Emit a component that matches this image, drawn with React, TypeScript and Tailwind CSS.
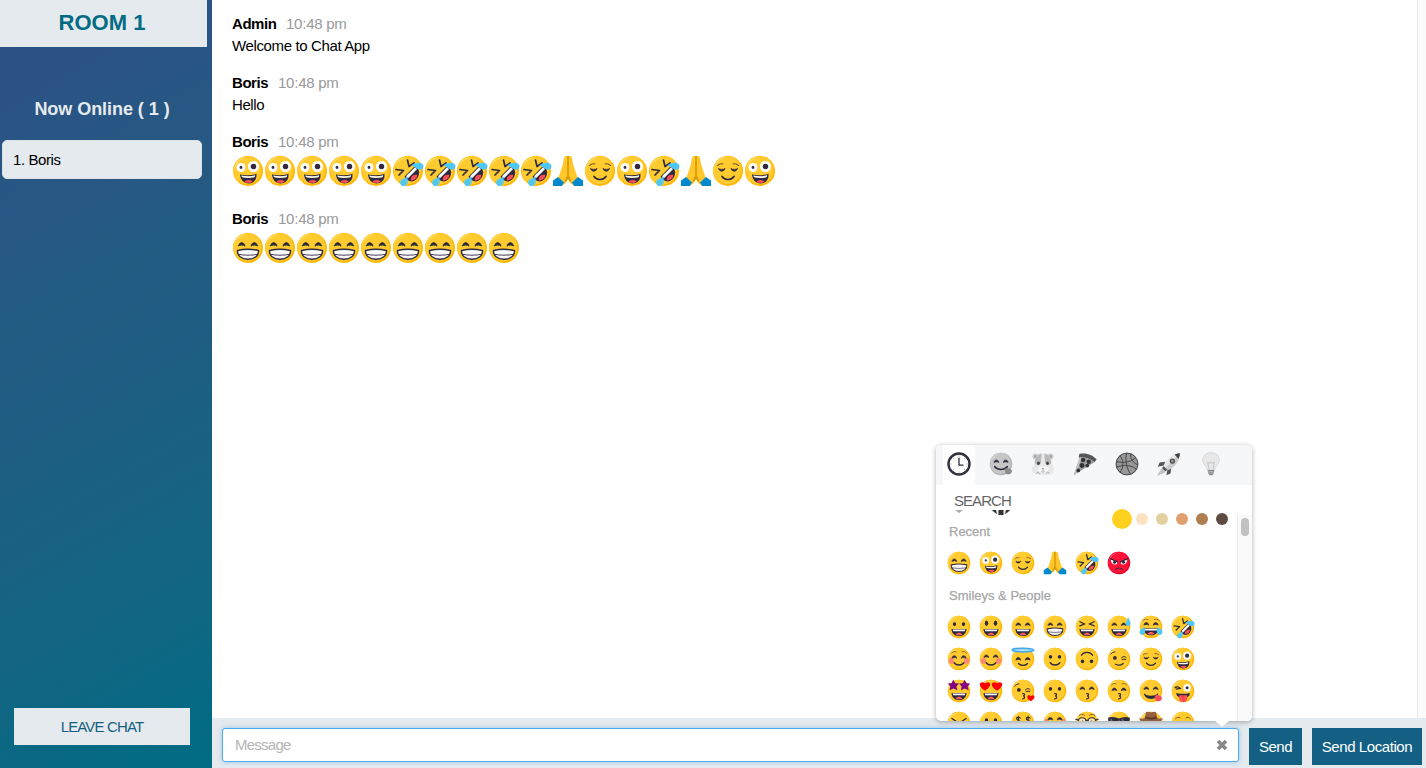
import React from "react";

const INK = "#2f2a3d";
const BLUE = "#4fc8f7";
const RED = "#ff0000";
const PINK = "#ff7f86";

const STROKE = { fill: "none", stroke: INK, strokeWidth: 3.4, strokeLinecap: "round" as const };

function Ball({ main = "#ffcb2f", shade = "#ffb500", light = "#ffe28c" }) {
  return (
    <g>
      <circle cx="32" cy="32" r="30" fill={shade} />
      <ellipse cx="30.5" cy="30.5" rx="28.2" ry="28.2" fill={main} />
      <path d="M5 25C8 13 17 5.5 28 4.5C18 8 10 14 5 25Z" fill={light} />
    </g>
  );
}

const HappyEyes = ({ y = 0 }) => (
  <path
    d="M13 28C14.500 19 24.500 19 26 28C22 25.500 17 25.500 13 28ZM38 28C39.500 19 49.500 19 51 28C47 25.500 42 25.500 38 28Z"
    transform={`translate(0 ${y})`}
    fill={INK}
    stroke={INK}
    strokeWidth="1.800"
    strokeLinejoin="round"
  />
);

const DotEyes = ({ ry = 5, y = 24 }) => (
  <g fill={INK}>
    <ellipse cx="20" cy={y} rx="4.500" ry={ry} />
    <ellipse cx="44" cy={y} rx="4.500" ry={ry} />
  </g>
);

const ClosedEyes = () => (
  <g>
    <path d="M13 27C15 34 24 34 26 27C22 29.500 17 29.500 13 27ZM38 27C40 34 49 34 51 27C47 29.500 42 29.500 38 27Z" fill={INK} stroke={INK} strokeWidth="1.500" strokeLinejoin="round" />
    <path d="M11 21C14 18 18 17 22 18M53 21C50 18 46 17 42 18" {...STROKE} stroke="#7a5a2a" strokeWidth="2.200" />
  </g>
);

const OpenMouth = ({ y = 0 }) => (
  <g transform={`translate(0 ${y})`}>
    <path d="M12 37H52C52 49 43 56 32 56C21 56 12 49 12 37Z" fill={INK} />
    <path d="M15 38.500H49L47.500 43.500H16.500Z" fill="#fff" />
    <path d="M23 52C27 46 37 46 41 52C36 55 28 55 23 52Z" fill="#ff5a64" />
  </g>
);

const Smile = () => <path d="M19 42C25 50 39 50 45 42" {...STROKE} />;
const Kiss = () => <path d="M31 39C38 38 38 44 32 45.500C38 46 38 53 31 53" {...STROKE} strokeWidth="3" />;
const Cheeks = () => (
  <g fill={PINK} opacity=".85">
    <circle cx="12" cy="37" r="7.500" />
    <circle cx="52" cy="37" r="7.500" />
  </g>
);
const Squint = () => <path d="M13 18L25 24L13 29M51 18L39 24L51 29" {...STROKE} strokeWidth="3.600" />;
const Heart = ({ x, y, s }: { x: number; y: number; s: number }) => (
  <path transform={`translate(${x} ${y}) scale(${s})`} d="M0 10C-18 0-10-12 0-5C10-12 18 0 0 10Z" fill={RED} />
);
const Wild = () => (
  <g>
    <circle cx="18" cy="25" r="9" fill="#fff" />
    <circle cx="43" cy="23" r="11" fill="#fff" />
    <circle cx="18" cy="25" r="2.800" fill={INK} />
    <circle cx="43" cy="23" r="5.500" fill={INK} />
  </g>
);
const Star = ({ x }: { x: number }) => (
  <path transform={`translate(${x} 17)`} d="M0-15L5-6L15-5L8 3L11 13L0 8L-10 13L-8 3L-15-5L-5-6Z" fill="#850080" />
);
const Wink = () => (
  <g>
    <ellipse cx="21" cy="29" rx="5" ry="5" fill={INK} />
    <path d="M39 28C43 25 48 25 51 28M40 33H50M10 19C13 15 17 13 21 13" {...STROKE} strokeWidth="2.600" />
  </g>
);

function art(kind: string): React.ReactNode {
  switch (kind) {
    case "grinning":
      return <><Ball /><DotEyes /><OpenMouth /></>;
    case "smiley":
      return <><Ball /><DotEyes ry={7.5} y={22} /><OpenMouth /></>;
    case "smile":
      return <><Ball /><HappyEyes /><OpenMouth /></>;
    case "grin":
      return (
        <>
          <Ball />
          <HappyEyes />
          <path d="M11 37C24 34 40 34 53 37C54 47 45 54.500 32 54.500C19 54.500 10 47 11 37Z" fill="#fff" stroke={INK} strokeWidth="2.800" strokeLinejoin="round" />
          <path d="M22 37L24 53M32 36V53M42 37L40 53" fill="none" stroke="#d8d7dc" strokeWidth="1" />
          <path d="M12 44.500C26 47 38 47 52 44.500" fill="none" stroke={INK} strokeWidth="1.800" />
        </>
      );
    case "laughing":
      return <><Ball /><Squint /><OpenMouth /></>;
    case "sweat":
      return <><Ball /><HappyEyes /><OpenMouth /><path d="M56 5C59 13 64 19 63 24C62 31 51 31 50 24C50 18 55 12 56 5Z" fill={BLUE} /></>;
    case "joy":
      return (
        <>
          <Ball /><HappyEyes y={-1} /><OpenMouth y={-2} />
          <path d="M10 15C14 11 19 10 23 12M54 15C50 11 45 10 41 12" {...STROKE} stroke="#7a5a2a" strokeWidth="2" />
          <path d="M14 32C18 42 17 52 9 53C1 53 0 44 3 40C6 36 11 36 14 32ZM50 32C46 42 47 52 55 53C63 53 64 44 61 40C58 36 53 36 50 32Z" fill={BLUE} />
        </>
      );
    case "rofl":
      return (
        <>
          <Ball />
          <path d="M31 10L34 23L44 16M8 29L23 31L14 40" {...STROKE} strokeWidth="3.400" strokeLinejoin="round" />
          <path d="M25 43L47 21C56 29 57 41 48 49C41 56 31 53 25 43Z" fill={INK} />
          <path d="M28 42.500L46 24.500L50 28.500L32 46.500Z" fill="#fff" />
          <path d="M38 51C36 45 42 38 51 40C50 46 45 51 38 51Z" fill="#ff4d58" />
          <path d="M38 21C44 16 55 13 61 18C66 24 61 31 54 29C48 28 45 22 38 21Z" fill={BLUE} />
          <path d="M30 43C32 49 33 57 27 61C20 65 14 59 17 52C19 47 26 48 30 43Z" fill={BLUE} />
        </>
      );
    case "relaxed":
      return (
        <><Ball /><Cheeks /><HappyEyes y={2} /><Smile /><path d="M12 17C15 12 20 11 24 13M52 17C49 12 44 11 40 13" {...STROKE} stroke="#7a5a2a" strokeWidth="2.200" /></>
      );
    case "blush":
      return <><Ball /><Cheeks /><HappyEyes /><Smile /></>;
    case "angel":
      return <><Ball /><HappyEyes y={7} /><path d="M20 44C26 51 38 51 44 44" {...STROKE} /><ellipse cx="32" cy="8" rx="29" ry="5" fill="#a9ddfb" stroke="#42a8ed" strokeWidth="4" /></>;
    case "slight":
      return <><Ball /><DotEyes y={26} /><Smile /></>;
    case "upside":
      return <><Ball /><DotEyes y={38} /><path d="M17 22C24 12 40 12 47 22" {...STROKE} /></>;
    case "wink":
      return <><Ball /><Wink /><path d="M23 46C31 50 39 48 43 44" {...STROKE} /></>;
    case "relieved":
      return <><Ball /><ClosedEyes /><path d="M20 43C26 51 38 51 44 43" {...STROKE} /></>;
    case "zany":
      return (
        <>
          <Ball /><Wild />
          <path d="M16 39C26 41 38 41 49 38C50 50 43 57 33 57C24 57 17 50 16 39Z" fill={INK} />
          <path d="M18.500 41C29 43 38 43 46.500 40.500L45 44.500C37 46.500 29 46.500 20 44.500Z" fill="#fff" />
          <path d="M25 54C28 49 38 49 41 53C37 57 30 57 25 54Z" fill="#ff4d58" />
        </>
      );
    case "starstruck":
      return <><Ball /><Star x={17} /><Star x={47} /><OpenMouth /></>;
    case "hearteyes":
      return <><Ball /><Heart x={16} y={18} s={1.3} /><Heart x={48} y={18} s={1.3} /><OpenMouth /></>;
    case "kissheart":
      return <><Ball /><Wink /><Kiss /><Heart x={53} y={50} s={0.9} /></>;
    case "kissing":
      return <><Ball /><DotEyes y={26} /><Kiss /></>;
    case "kisssmile":
      return <><Ball /><HappyEyes /><Kiss /></>;
    case "kissclosed":
      return <><Ball /><HappyEyes y={3} /><Kiss /><path d="M12 16C15 12 20 11 24 13M52 16C49 12 44 11 40 13" {...STROKE} stroke="#7a5a2a" strokeWidth="2.200" /></>;
    case "yum":
      return <><Ball /><HappyEyes /><path d="M13 38C22 47 42 47 51 38C51 47 43 53 32 53C21 53 14 47 13 38Z" fill={INK} /><path d="M42 47C46 40 56 43 61 49C61 60 50 62 44 57Z" fill="#ff4d58" /></>;
    case "winktongue":
      return <><Ball /><path d="M11 23C15 20 21 21 25 25L14 27" {...STROKE} /><circle cx="43" cy="23" r="10" fill="#fff" /><circle cx="43" cy="23" r="4" fill={INK} /><path d="M14 37C25 40 39 40 50 37C50 46 46 49 32 50C20 49 15 46 14 37Z" fill={INK} /><path d="M22 43H43V53C43 64 22 64 22 53Z" fill="#ff4d58" /><path d="M32 43V54" stroke="#d92a43" strokeWidth="2" /></>;
    case "tongueclosed":
      return <><Ball /><path d="M13 20L25 28L13 32M51 20L39 28L51 32" {...STROKE} /><OpenMouth y={4} /></>;
    case "tongue":
      return <><Ball /><DotEyes ry={6} y={25} /><OpenMouth /></>;
    case "money":
      return <><Ball /><g {...STROKE} strokeWidth="3"><path d="M25 19C20 15 14 17 15 21C16 25 25 24 25 29C24 33 17 34 13 30M20 14V35M51 19C46 15 40 17 41 21C42 25 51 24 51 29C50 33 43 34 39 30M46 14V35" /></g></>;
    case "hug":
      return <><Ball /><g fill={PINK}><circle cx="9" cy="27" r="6" /><circle cx="54" cy="27" r="6" /></g><HappyEyes y={-4} /><path d="M18 36C25 40 39 40 46 36C44 48 20 48 18 36Z" fill={INK} /></>;
    case "nerd":
      return <><Ball /><path d="M11 12C15 8 21 8 25 11M53 12C49 8 43 8 39 11" {...STROKE} stroke="#7a5a2a" strokeWidth="2.500" /><circle cx="19" cy="29" r="11" fill="#ffe9a8" stroke={INK} strokeWidth="3.200" /><circle cx="45" cy="29" r="11" fill="#ffe9a8" stroke={INK} strokeWidth="3.200" /><path d="M2 22L10 24M62 22L54 24M29 26C31 24 33 24 35 26" {...STROKE} strokeWidth="3" /><circle cx="20" cy="29" r="3.500" fill={INK} /><circle cx="44" cy="29" r="3.500" fill={INK} /></>;
    case "cool":
      return <><Ball /><path d="M3 18C15 14 25 18 32 20C39 18 49 14 61 18C61 31 56 38 47 38C39 38 35 32 34 26H30C29 32 25 38 17 38C8 38 3 31 3 18Z" fill={INK} /><path d="M10 22L18 34M40 22L48 34" stroke="#777282" strokeWidth="4" /></>;
    case "cowboy":
      return <><Ball /><path d="M1 18C5 22 12 21 16 18L18 4C24 0 28 4 32 4C36 4 40 0 46 4L48 18C52 21 59 22 63 18C63 29 51 31 32 31C13 31 1 29 1 18Z" fill="#955f42" /><path d="M17 14C27 18 37 18 47 14L48 20C38 24 26 24 16 20Z" fill="#633d2b" /></>;
    case "smirk":
      return <><Ball /><path d="M12 21C15 17 20 16 24 18M40 18C44 16 49 17 52 21" {...STROKE} stroke="#7a5a2a" strokeWidth="2.500" /><path d="M13 29H25M39 29H51" {...STROKE} /></>;
    case "rage":
      return <><Ball main="#ff1237" shade="#e9002a" light="#ff7188" /><path d="M10 23C17 23 23 26 28 31C25 39 12 38 10 23M54 23C47 23 41 26 36 31C39 39 52 38 54 23" fill="#fff" /><path d="M8 20L28 29M56 20L36 29" {...STROKE} strokeWidth="3.600" /><circle cx="20" cy="30" r="4" fill={INK} /><circle cx="44" cy="30" r="4" fill={INK} /><path d="M23 49C27 44 37 44 41 49" {...STROKE} strokeWidth="3" /></>;
    case "pray":
      return (
        <>
          <path d="M28 2C24 2 23 9 22 18L15 39L10 51L22 60C28 57 30 52 32 48C34 52 36 57 42 60L54 51L49 39L42 18C41 9 40 2 36 2Z" fill="#ffc72c" />
          <path d="M30 2H34V42C37 46 38 51 40 57L33 49H31L24 57C26 51 27 46 30 42Z" fill="#d99a00" />
          <path d="M32 3V43" stroke="#e9b11c" strokeWidth="1.500" />
          <path d="M12 44L24 55L20 62H2V51ZM52 44L40 55L44 62H62V51Z" fill="#0089cf" />
        </>
      );
    case "clock":
      return <><circle cx="32" cy="32" r="28" fill="#fff" stroke="#30303f" strokeWidth="6.500" /><path d="M32 15V35H44" fill="none" stroke="#30303f" strokeWidth="3.500" /><path d="M32 9V12M32 52V55M9 32H12M52 32H55M16 16L18 18M48 16L46 18M16 48L18 46M48 48L46 46" stroke="#888" strokeWidth="2" /></>;
    case "hamster":
      return (
        <>
          <circle cx="12" cy="12" r="8" fill="#cfcfcf" /><circle cx="52" cy="12" r="8" fill="#cfcfcf" />
          <circle cx="12" cy="12" r="4" fill="#9c9c9c" /><circle cx="52" cy="12" r="4" fill="#9c9c9c" />
          <path d="M32 3C47 3 54 14 55 28C57 37 62 39 62 47C62 57 51 61 32 61C13 61 2 57 2 47C2 39 7 37 9 28C10 14 17 3 32 3Z" fill="#e8e8e8" />
          <path d="M10 27C11 13 19 5 28 4L27 28C24 38 12 37 10 27ZM54 27C53 13 45 5 36 4L37 28C40 38 52 37 54 27Z" fill="#b9b9b9" />
          <ellipse cx="20" cy="30" rx="3.500" ry="4.500" fill="#3c3c3c" /><ellipse cx="44" cy="30" rx="3.500" ry="4.500" fill="#3c3c3c" />
          <ellipse cx="32" cy="46" rx="13" ry="9" fill="#f8f8f8" />
          <path d="M28 43H36L32 47Z" fill="#777" />
          <path d="M32 47V51M27 52C30 54 34 54 37 52M15 58C17 52 22 53 23 59M41 59C42 53 47 52 49 58" fill="none" stroke="#9a9a9a" strokeWidth="2" />
        </>
      );
    case "pizza":
      return (
        <>
          <path d="M17 5C36 1 54 9 63 20L57 27C44 16 31 14 15 15Z" fill="#575757" />
          <path d="M18 14C32 13 46 17 57 27L2 62Z" fill="#a0a0a0" />
          <path d="M18 14L2 62L9 57L22 15Z" fill="#c6c6c6" />
          <g fill="#333"><circle cx="27" cy="21" r="6" /><circle cx="42" cy="26" r="6" /><circle cx="24" cy="36" r="6.500" /><circle cx="38" cy="36" r="5" /><circle cx="14" cy="49" r="5" /></g>
        </>
      );
    case "ball":
      return <><circle cx="32" cy="32" r="30" fill="#989898" /><g fill="none" stroke="#484848" strokeWidth="2.600"><circle cx="32" cy="32" r="29" /><path d="M4 25C23 31 43 27 56 14M31 3C26 20 31 44 42 60M13 10C23 20 24 42 13 54M61 34C46 29 39 15 43 4M3 41C22 32 47 35 58 47" /></g></>;
    case "rocket":
      return (
        <>
          <path d="M22 26L7 28L2 39L18 36ZM38 42L36 57L25 62L28 46Z" fill="#555" />
          <path d="M14 42L2 62L22 53Z" fill="#c8c8c8" stroke="#999" strokeWidth="1" />
          <path d="M18 38C23 20 42 4 61 3C61 23 46 43 27 48Z" fill="#e6e6e6" />
          <path d="M27 48C46 43 61 23 61 3L22 43Z" fill="#c9c9c9" />
          <path d="M47 7C52 4 57 3 61 3C61 8 60 13 57 18Z" fill="#454545" />
          <circle cx="41" cy="24" r="5.500" fill="#999" stroke="#444" strokeWidth="3" />
          <path d="M17 37L28 48L22 51L14 43Z" fill="#555" />
        </>
      );
    case "bulb":
      return (
        <>
          <path d="M32 2C17 2 9 11 10 23C11 34 22 38 23 49H41C42 38 53 34 54 23C55 11 47 2 32 2Z" fill="#e8e8e8" stroke="#d0d0d0" strokeWidth="2" />
          <path d="M27 48L23 27L29 31L32 26L35 31L41 27L37 48" fill="none" stroke="#bcbcbc" strokeWidth="2" />
          <path d="M23 48H41L39 58L35 62H29L25 58Z" fill="#858585" />
          <path d="M23 51L40 53M25 56H39" stroke="#c5c5c5" strokeWidth="2" />
        </>
      );
    case "yumgrey":
      return (
        <>
          <Ball main="#c6c6c6" shade="#b2b2b2" light="#dedede" /><HappyEyes />
          <path d="M15 39C24 49 40 49 49 39" {...STROKE} strokeWidth="4" />
          <path d="M42 47C46 40 56 43 61 49C61 60 50 62 44 57Z" fill="#8c8c8c" />
        </>
      );
    default:
      return <Ball />;
  }
}

function Emoji({ kind, large = false }: { kind: string; large?: boolean }) {
  return (
    <svg viewBox="0 0 64 64" className={large ? "size-8 shrink-0" : "size-6 shrink-0"} aria-hidden="true">
      {art(kind)}
    </svg>
  );
}

const row1 = ["zany", "zany", "zany", "zany", "zany", "rofl", "rofl", "rofl", "rofl", "rofl", "pray", "relieved", "zany", "rofl", "pray", "relieved", "zany"];
const row2 = Array<string>(9).fill("grin");
const recent = ["grin", "zany", "relieved", "pray", "rofl", "rage"];
const people = [
  "grinning", "smiley", "smile", "grin", "laughing", "sweat", "joy", "rofl",
  "relaxed", "blush", "angel", "slight", "upside", "wink", "relieved", "zany",
  "starstruck", "hearteyes", "kissheart", "kissing", "kisssmile", "kissclosed", "yum", "winktongue",
  "tongueclosed", "tongue", "money", "hug", "nerd", "cool", "cowboy", "smirk",
];
const tabs = ["clock", "yumgrey", "hamster", "pizza", "ball", "rocket", "bulb"];
const tones = ["bg-[#fee1c2]", "bg-[#e4cf9f]", "bg-[#e19f70]", "bg-[#af7e51]", "bg-[#5e4b41]"];

function Message({ author, wide = false, children }: { author: string; wide?: boolean; children: React.ReactNode }) {
  return (
    <article>
      <div className="flex h-[22px] items-center gap-[10px] text-[15px]">
        <span className={wide ? "w-[44px] whitespace-nowrap font-bold tracking-[-0.45px]" : "w-[36px] whitespace-nowrap font-bold tracking-[-0.45px]"}>{author}</span>
        <span className="tracking-[-0.24px] text-[#999]">10:48 pm</span>
      </div>
      {children}
    </article>
  );
}

function Picker() {
  return (
    <div className="absolute left-[936px] top-[445px] h-[276px] w-[316px] rounded-[5px] bg-white shadow-[0_1px_5px_rgba(0,0,0,0.32)]">
      <div className="flex h-full flex-col overflow-hidden rounded-[5px]">
        <div className="flex h-10 shrink-0 gap-[10px] bg-[#f5f7f9] pl-[7px]">
          {tabs.map((t, i) => (
            <div key={t} className={i === 0 ? "flex w-8 justify-center bg-white pt-[7px]" : "flex w-8 justify-center pt-[7px]"}>
              <Emoji kind={t} />
            </div>
          ))}
        </div>
        <div className="flex h-[25px] shrink-0 items-end pl-[18px] text-[15px] leading-[18px] text-[#666]">
          <span className="h-[18px] tracking-[-0.95px]">SEARCH</span>
        </div>
        <div className="flex min-h-0 flex-1">
          <div className="flex-1 pl-[7px]">
            <div className="flex h-[37px] justify-between pl-[6px] pr-[9px]">
              <div>
                <svg width="62" height="5" viewBox="0 0 62 5" className="block" aria-hidden="true">
                  <path d="M6 0H14L10 3Z" fill="#aaa" />
                  <path d="M42 0H62C60 3 57 5 52 5C47 5 44 3 42 0Z" fill="#eee" />
                  <path d="M43 0H47L48 4L45 2ZM49.500 0H54.500V5H49.500ZM57 0H61L59 2L56 4Z" fill="#333" />
                </svg>
                <div className="h-8 pt-px text-[13px] leading-8 text-[#a6a6a6] [-webkit-text-stroke:0.25px_#a6a6a6]">Recent</div>
              </div>
              <div className="flex h-[18px] items-center">
                <span className="mr-1 size-5 rounded-full bg-[#ffd11f]" />
                <span className="flex gap-2">
                  {tones.map((t) => <span key={t} className={`size-3 rounded-full ${t}`} />)}
                </span>
              </div>
            </div>
            <div className="flex h-8 items-center gap-2 pl-[4px]">
              {recent.map((k) => <Emoji key={k} kind={k} />)}
            </div>
            <div className="h-8 pl-[6px] pt-px text-[13px] leading-8 text-[#a6a6a6] [-webkit-text-stroke:0.25px_#a6a6a6]">Smileys &amp; People</div>
            <div className="grid w-[256px] grid-cols-8">
              {people.map((k) => (
                <div key={k} className="flex size-8 items-center justify-center"><Emoji kind={k} /></div>
              ))}
            </div>
          </div>
          <div className="mt-[5px] flex w-[15px] justify-center border-l border-[#e8e8e8] bg-[#fafafa] pt-[3px]">
            <div className="h-[18px] w-2 rounded-full bg-[#c1c1c1]" />
          </div>
        </div>
      </div>
      <svg className="absolute left-[279px] top-[275px] h-[8px] w-[14px]" viewBox="0 0 14 8" aria-hidden="true">
        <path d="M0 1L7 7.500L14 1" fill="#fff" stroke="#c6cbd0" strokeWidth="0.600" />
        <path d="M0 0H14V1H0Z" fill="#fff" />
      </svg>
    </div>
  );
}

export default function App() {
  return (
    <div className="relative flex h-[768px] w-[1426px] overflow-hidden bg-white font-['Liberation_Sans',Arial,sans-serif] text-black">
      <aside className="flex w-[212px] shrink-0 flex-col bg-[linear-gradient(150deg,#2d5086_0%,#265983_30%,#1f5d83_49%,#136583_76%,#006c84_100%)]">
        <h1 className="h-[47px] w-[207px] bg-[#e5eaee] pr-[3px] text-center text-[22px] font-bold leading-[46px] text-[#036b84]">ROOM 1</h1>
        <h2 className="mt-[49px] w-[204px] text-center text-[18px] font-bold leading-[26px] tracking-[-0.05px] text-[#e5eaee]">Now Online ( 1 )</h2>
        <div className="ml-[2px] mt-[18px] h-[39px] w-[200px] rounded-[5px] border border-[#dce2e6] bg-[#e5eaee] pl-[10px] text-[15px] leading-[38px] tracking-[-0.4px]">1. Boris</div>
        <button className="mb-[23px] ml-[14px] mt-auto h-[37px] w-[176px] bg-[#e5eaee] pt-px text-[15px] tracking-[-0.85px] text-[#145f82]">LEAVE CHAT</button>
      </aside>
      <main className="flex min-w-0 flex-1 flex-col">
        <section className="flex min-h-0 flex-1">
          <div className="flex flex-1 flex-col pl-5 pt-[13px]">
            <Message author="Admin" wide>
              <p className="h-[37px] text-[15px] leading-[22px] tracking-[-0.37px]">Welcome to Chat App</p>
            </Message>
            <Message author="Boris">
              <p className="h-[37px] text-[15px] leading-[22px] tracking-[-0.4px]">Hello</p>
            </Message>
            <Message author="Boris">
              <div className="flex h-[55px] pt-[2px]">{row1.map((k, i) => <Emoji key={i} kind={k} large />)}</div>
            </Message>
            <Message author="Boris">
              <div className="flex pt-[2px]">{row2.map((k, i) => <Emoji key={i} kind={k} large />)}</div>
            </Message>
          </div>
          <div className="w-[9px] border-l border-[#e8e8e8] bg-[#fafafa]" />
        </section>
        <form className="flex h-[50px] shrink-0 items-start gap-[10px] bg-[#e5eaee] pl-[10px] pt-[10px]">
          <div className="flex h-[34px] w-[1017px] items-center justify-between rounded-[3px] border border-[#4faaf0] bg-white pl-3 pr-[10px] shadow-[0_0_5px_rgba(82,168,236,0.5)]">
            <span className="text-[15px] tracking-[-0.75px] text-[#b5b5b5]">Message</span>
            <svg viewBox="0 0 12 12" className="size-3" aria-hidden="true">
              <path d="M2 2L10 10M10 2L2 10" stroke="#888" strokeWidth="3.600" />
            </svg>
          </div>
          <button type="button" className="h-[37px] w-[53px] bg-[#145f84] pt-px text-[15px] tracking-[-0.5px] text-white">Send</button>
          <button type="button" className="h-[37px] w-[110px] whitespace-nowrap bg-[#145f84] pt-px text-[15px] tracking-[-0.42px] text-white">Send Location</button>
        </form>
      </main>
      <Picker />
    </div>
  );
}
